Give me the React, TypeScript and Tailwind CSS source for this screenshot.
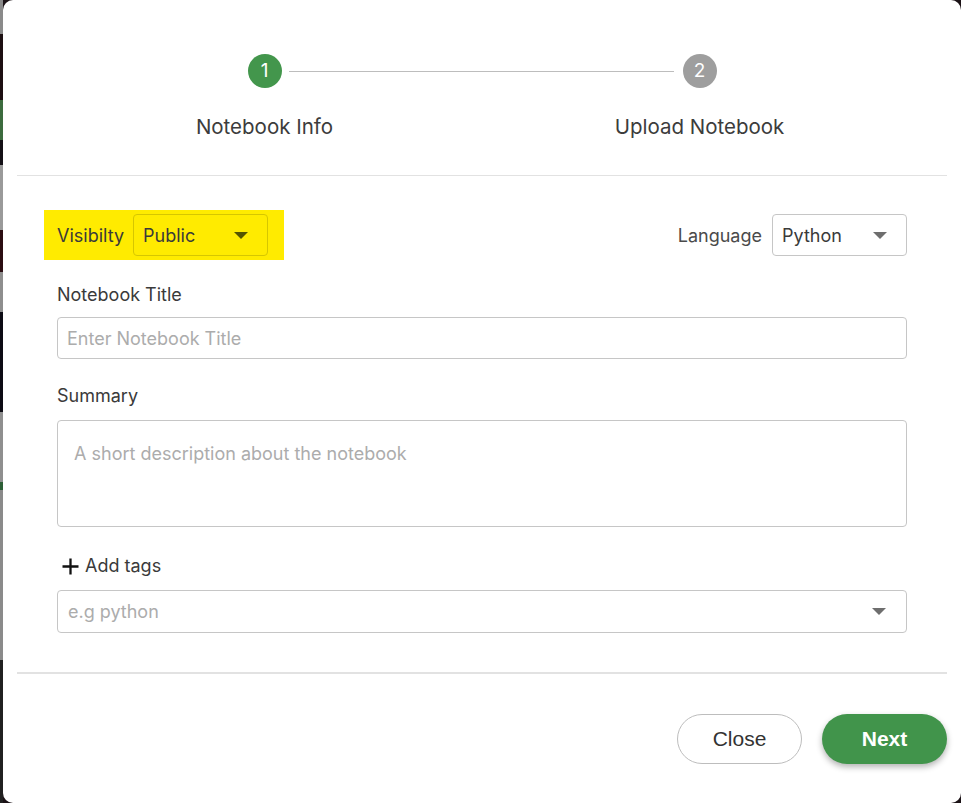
import { Fragment } from 'react'

function Caret({ className = '' }: { className?: string }) {
  return (
    <svg width="14" height="7" viewBox="0 0 14 7" className={className}>
      <path d="M0 0 L14 0 L7 7 Z" fill="currentColor" />
    </svg>
  )
}

function PlusIcon() {
  return (
    <svg width="17" height="17" viewBox="0 0 17 17" className="text-[#111]">
      <path d="M8.5 0.5 V16.5 M0.5 8.5 H16.5" stroke="currentColor" strokeWidth="2.3" />
    </svg>
  )
}

function Step({ n, label, active }: { n: number; label: string; active?: boolean }) {
  return (
    <div className="flex w-[240px] flex-col items-center">
      <div
        className={`grid h-[34px] w-[34px] place-items-center rounded-full text-[19px] text-white ${
          active ? 'bg-[#43964c]' : 'bg-[#9e9e9e]'
        }`}
      >
        {n}
      </div>
      <div className="mt-[24px] text-[20.5px] leading-[30px] text-[#3c3c3c]">{label}</div>
    </div>
  )
}

// strip of the dimmed page that shows to the left of the modal
const backdrop = [
  'h-[34px] bg-[#8a8a8a]',
  'h-[66px] bg-[#1c0f12]',
  'h-[40px] bg-[#3c6b3e]',
  'h-[25px] bg-[#141016]',
  'h-[65px] bg-[#9a9a9a]',
  'h-[42px] bg-[#2b0d12]',
  'h-[40px] bg-[#8e8e8e]',
  'h-[100px] bg-[#0c0b14]',
  'h-[70px] bg-[#8f8f8f]',
  'h-[8px] bg-[#2c5e36]',
  'h-[170px] bg-[#8a8a8a]',
  'flex-1 bg-[#202020]',
]

export default function App() {
  return (
    <div className="flex h-[803px] w-[961px] overflow-hidden bg-[#1b1216] font-['Inter','Noto_Sans',sans-serif]">
      <div className="flex w-[3px] shrink-0 flex-col">
        {backdrop.map((c, i) => (
          <Fragment key={i}>
            <div className={c} />
          </Fragment>
        ))}
      </div>

      <div className="flex flex-1 flex-col rounded-[10px] bg-white">
        {/* stepper */}
        <div className="flex justify-center pt-[54px]">
          <div className="relative flex gap-[195px]">
            <div className="absolute left-[144px] right-[146px] top-[17px] h-px bg-[#bdbdbd]" />
            <Step n={1} label="Notebook Info" active />
            <Step n={2} label="Upload Notebook" />
          </div>
        </div>

        <div className="mx-[14px] mt-[33px] h-px bg-[#e2e2e2]" />

        <div className="flex flex-col px-[54px] pt-[34px] text-[18px] text-[#3a3a3a]">
          <div className="flex items-center justify-between">
            <div className="-ml-[13px] flex h-[50px] w-[240px] items-center bg-[#ffeb00] pl-[13px]">
              <span>Visibilty</span>
              <div className="ml-[9px] flex h-[42px] w-[135px] items-center justify-between rounded-[4px] border border-[#d6c600] pl-[9px] pr-[19px]">
                <span>Public</span>
                <Caret className="text-[#545400]" />
              </div>
            </div>
            <div className="flex items-center">
              <span className="text-[#4a4a4a]">Language</span>
              <div className="ml-[10px] flex h-[42px] w-[135px] items-center justify-between rounded-[4px] border border-[#c6c6c6] pl-[9px] pr-[19px]">
                <span>Python</span>
                <Caret className="text-[#6e6e6e]" />
              </div>
            </div>
          </div>

          <label className="mt-[23px] leading-[24px]">Notebook Title</label>
          <div className="mt-[10px] flex h-[42px] items-center rounded-[4px] border border-[#c6c6c6] px-[9px] text-[#acacac]">
            Enter Notebook Title
          </div>

          <label className="mt-[25px] leading-[24px]">Summary</label>
          <div className="mt-[12px] h-[107px] rounded-[4px] border border-[#c6c6c6] px-[16px] pt-[21px] leading-[24px] text-[#acacac]">
            A short description about the notebook
          </div>

          <div className="mt-[27px] flex items-center gap-[6px] pl-[5px] leading-[24px]">
            <PlusIcon />
            <span>Add tags</span>
          </div>
          <div className="mt-[12px] flex h-[43px] items-center justify-between rounded-[4px] border border-[#c6c6c6] pl-[10px] pr-[20px] text-[#acacac]">
            <span>e.g python</span>
            <Caret className="text-[#6e6e6e]" />
          </div>
        </div>

        <div className="mx-[14px] mt-[39px] h-[2px] bg-[#e2e2e2]" />

        <div className="flex justify-end gap-[20px] pr-[14px] pt-[40px] font-['Liberation_Sans','Arial',sans-serif] text-[21px]">
          <button className="h-[50px] w-[125px] rounded-full border border-[#bdbdbd] text-[#333]">Close</button>
          <button className="h-[50px] w-[125px] rounded-full bg-[#41944b] font-bold text-white shadow-[0_3px_6px_rgba(0,0,0,0.3)]">
            Next
          </button>
        </div>
      </div>
    </div>
  )
}
